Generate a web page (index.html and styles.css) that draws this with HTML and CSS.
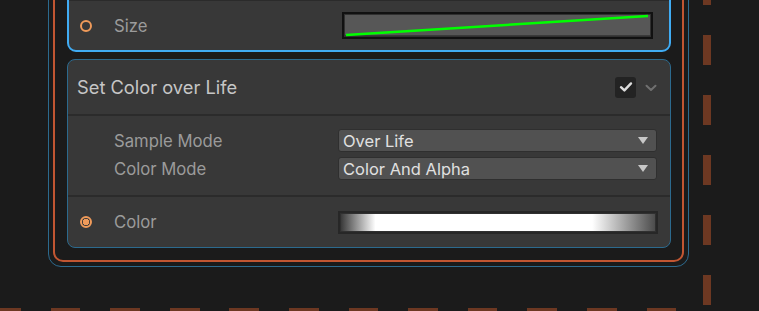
FILE: index.html
```html
<!DOCTYPE html>
<html lang="en">
<head>
    <meta charset="UTF-8">
    <title>VFX Graph | Set Color over Life</title>
    <meta name="viewport" content="width=device-width, initial-scale=1.0">
    <link rel="stylesheet" href="styles.css">
</head>
<body>
    <div class="canvas">
        <!-- flow edges (dashed) -->
        <div class="edge edge-v"></div>
        <div class="edge edge-h"></div>

        <div class="node">
            <div class="node-inner">
                <div class="block block-selected">
                    <div class="block-top"></div>
                    <div class="prop-row size-row">
                        <span class="port"></span>
                        <span class="prop-label">Size</span>
                        <div class="curve-field">
                            <svg viewBox="0 0 307 23" preserveAspectRatio="none">
                                <line x1="2" y1="21" x2="304" y2="2" stroke="#00ff00" stroke-width="2.4"/>
                            </svg>
                        </div>
                    </div>
                </div>

                <div class="block">
                    <div class="block-header">
                        <span class="block-title">Set Color over Life</span>
                        <span class="toggle">
                            <svg width="20" height="20" viewBox="0 0 20 20">
                                <path d="M5 10.2 L8.4 13.4 L15 6.4" fill="none" stroke="#dcdcdc" stroke-width="2.4" stroke-linecap="round" stroke-linejoin="round"/>
                            </svg>
                        </span>
                        <svg class="chevron" width="12" height="8" viewBox="0 0 12 8">
                            <path d="M1.5 1.8 L6 6 L10.5 1.8" fill="none" stroke="#707070" stroke-width="2" stroke-linecap="round" stroke-linejoin="round"/>
                        </svg>
                    </div>

                    <div class="settings">
                        <div class="setting-row">
                            <span class="setting-label">Sample Mode</span>
                            <div class="dropdown"><span>Over Life</span><span class="arrow"></span></div>
                        </div>
                        <div class="setting-row">
                            <span class="setting-label">Color Mode</span>
                            <div class="dropdown"><span>Color And Alpha</span><span class="arrow"></span></div>
                        </div>
                    </div>

                    <div class="prop-row color-row">
                        <span class="port port-linked"></span>
                        <span class="prop-label">Color</span>
                        <div class="gradient-field"><div class="gradient"></div></div>
                    </div>
                </div>
            </div>
        </div>
    </div>
</body>
</html>
```

FILE: styles.css
```css
:root {
    --bg: #1b1b1b;
    --block-bg: #383838;
    --line: #2b2b2b;
    --label: #9b9b9b;
    --title: #c6c6c6;
    --value: #e0e0e0;
    --orange: #c25632;
    --edge-blue: #2c6a8e;
    --select: #40acf4;
    --port: #ef9a5a;
    --dash: #6d3822;
}
html, body {
    margin: 0; padding: 0;
    background: var(--bg);
    font-family: 'Inter', 'Noto Sans', sans-serif;
    width: 759px;
    height: 311px;
    overflow: hidden;
}
.canvas {
    position: relative;
    width: 759px;
    height: 311px;
    overflow: hidden;
}

/* dashed flow edges */
.edge { position: absolute; }
.edge-v {
    left: 703px; top: -25px;
    width: 8px; height: 360px;
    background: repeating-linear-gradient(to bottom, var(--dash) 0 30px, transparent 30px 60px);
}
.edge-h {
    left: -9px; top: 308px;
    width: 700px; height: 8px;
    background: repeating-linear-gradient(to right, var(--dash) 0 29.7px, transparent 29.7px 59.6px);
}

/* node frame */
.node {
    position: absolute;
    left: 48px; top: -40px;
    width: 641px; height: 307px;
    box-sizing: border-box;
    border: 1px solid var(--edge-blue);
    border-radius: 13px;
    padding: 4px;
}
.node-inner {
    box-sizing: border-box;
    height: 100%;
    border: 2px solid var(--orange);
    border-radius: 10px;
    padding: 12px 11px 12px 12px;
    display: flex;
    flex-direction: column;
    gap: 7px;
}

/* blocks */
.block {
    background: var(--block-bg);
    border: 1px solid var(--edge-blue);
    border-radius: 8px;
    overflow: hidden;
    flex-shrink: 0;
}
.block-selected {
    border: 2px solid var(--select);
    border-radius: 9px;
}
.block-top {
    height: 19px;
    border-bottom: 1px solid var(--line);
}
.block-header {
    height: 54px;
    display: flex;
    align-items: center;
    padding: 0 13px 0 9px;
    border-bottom: 2px solid var(--line);
}
.block-title {
    flex: 1;
    color: var(--title);
    font-size: 18.3px;
}
.toggle {
    width: 21px; height: 21px;
    background: #232323;
    border-radius: 3px;
    display: flex;
    align-items: center;
    justify-content: center;
}
.chevron {
    margin-left: 9px;
    margin-top: 2px;
}

/* property rows */
.prop-row {
    display: flex;
    align-items: center;
}
.size-row { height: 49px; padding: 0 16px 0 11px; }
.color-row { height: 50px; padding: 0 12px 0 12px; }
.port {
    width: 12px; height: 12px;
    box-sizing: border-box;
    border: 2px solid var(--port);
    border-radius: 50%;
}
.port-linked {
    background: radial-gradient(circle, var(--port) 0 3px, transparent 3.5px);
}
.prop-label {
    color: var(--label);
    font-size: 16.7px;
    margin-left: 22px;
    width: 224px;
}
.size-row .prop-label { width: 228px; }
.curve-field {
    width: 311px; height: 27px;
    box-sizing: border-box;
    border: 2px solid #111;
    background: #575757;
    box-shadow: inset 0 0 0 1px #303030, inset 0 -2px 0 #3a3a3a;
}
.curve-field svg {
    display: block;
    width: 100%; height: 100%;
}
.gradient-field {
    flex: 1;
    height: 23px;
    box-sizing: border-box;
    border: 2px solid #272727;
    padding: 1px;
    background: #303030;
}
.gradient {
    height: 100%;
    background: linear-gradient(to right, #3a3a3a 0%, #ffffff 11%, #ffffff 80%, #4c4c4c 100%);
}

/* settings */
.settings {
    padding: 13px 13px 15px 46px;
    display: flex;
    flex-direction: column;
    gap: 5px;
    border-bottom: 2px solid var(--line);
}
.setting-row {
    display: flex;
    align-items: center;
    height: 23px;
}
.setting-label {
    width: 224px;
    color: var(--label);
    font-size: 16.7px;
}
.dropdown {
    flex: 1;
    height: 23px;
    box-sizing: border-box;
    background: #515151;
    border: 1px solid #2f2f2f;
    border-radius: 3px;
    display: flex;
    align-items: center;
    justify-content: space-between;
    padding: 0 8px 0 4px;
    color: var(--value);
    font-size: 16.5px;
}
.dropdown .arrow {
    width: 0; height: 0;
    border-left: 5.5px solid transparent;
    border-right: 5.5px solid transparent;
    border-top: 7px solid #c8c8c8;
}
```
